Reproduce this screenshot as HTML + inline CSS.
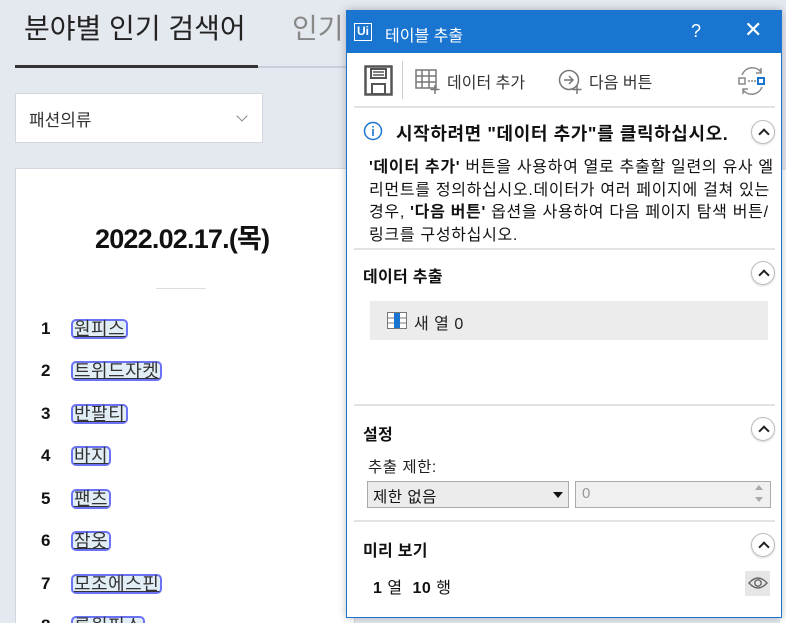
<!DOCTYPE html>
<html><head><meta charset="utf-8"><style>
*{margin:0;padding:0;box-sizing:border-box}
html,body{width:786px;height:623px;overflow:hidden}
body{background:#e4e8ef;position:relative;font-family:"Liberation Sans","Noto Sans CJK KR",sans-serif}
.a{position:absolute}
.tag{position:absolute;left:71px;height:20px;border:2px solid #6b72f5;border-radius:5px;background:#e2eef6;font-size:18px;line-height:16px;padding:0 1px;color:#333;text-decoration:underline;letter-spacing:0.5px}
.num{position:absolute;left:41px;font-size:17px;font-weight:bold;color:#111}
.dlg{position:absolute;left:346px;top:10px;width:436px;height:608px;background:#fff;border:1px solid #1a73cc;box-shadow:0 0 8px rgba(0,0,0,.25)}
.sep{position:absolute;left:7px;right:6px;height:2px;background:#e3e3e3}
.up{position:absolute;left:404px;width:24px;height:24px;border:1px solid #bbb;border-radius:50%;box-shadow:0 1px 2px rgba(0,0,0,.15)}
.up:after{content:"";position:absolute;left:8px;top:9px;width:6px;height:6px;border-left:2.5px solid #222;border-top:2.5px solid #222;transform:rotate(45deg)}
.h{position:absolute;left:16px;font-size:16px;font-weight:bold;color:#111;letter-spacing:0.3px}
.ln{white-space:nowrap;height:22.5px}
</style></head><body>
<div class="a" style="left:24px;top:7px;font-size:28px;color:#222">분야별 인기 검색어</div>
<div class="a" style="left:292px;top:7px;font-size:28px;color:#888">인기</div>
<div class="a" style="left:15px;top:65px;width:243px;height:3px;background:#333"></div>
<div class="a" style="left:258px;top:66px;width:100px;height:2px;background:#ccd"></div>
<div class="a" style="left:15px;top:93px;width:248px;height:50px;background:#fff;border:1px solid #d3d6dc"></div>
<div class="a" style="left:29px;top:106px;font-size:17px;color:#333">패션의류</div>
<div class="a" style="left:238px;top:112px;width:8px;height:8px;border-right:1.5px solid #888;border-bottom:1.5px solid #888;transform:rotate(45deg)"></div>
<div class="a" style="left:15px;top:168px;width:340px;height:460px;background:#fff;border:1px solid #d3d6dc"></div>
<div class="a" style="left:95px;top:217px;font-size:27px;font-weight:bold;color:#111;letter-spacing:-0.8px">2022.02.17.(목)</div>
<div class="a" style="left:156px;top:288px;width:50px;height:1px;background:#ddd"></div>
<div class="num" style="top:319px">1</div><div class="tag" style="top:319px">원피스</div>
<div class="num" style="top:361px">2</div><div class="tag" style="top:361px">트위드자켓</div>
<div class="num" style="top:404px">3</div><div class="tag" style="top:404px">반팔티</div>
<div class="num" style="top:446px">4</div><div class="tag" style="top:446px">바지</div>
<div class="num" style="top:489px">5</div><div class="tag" style="top:489px">팬츠</div>
<div class="num" style="top:531px">6</div><div class="tag" style="top:531px">잠옷</div>
<div class="num" style="top:574px">7</div><div class="tag" style="top:574px">모조에스핀</div>
<div class="num" style="top:616px">8</div><div class="tag" style="top:616px">롱원피스</div>
<div class="a" style="left:780px;top:170px;width:6px;height:453px;background:#fff"></div>

<div class="dlg">
 <div class="a" style="left:0;top:0;width:434px;height:42px;background:#1a75d0"></div>
 <div class="a" style="left:7px;top:12px;width:18px;height:18px;border:1.5px solid #fff;color:#fff;font-size:12px;font-weight:bold;line-height:15px;text-align:center">Ui</div>
 <div class="a" style="left:38px;top:11px;font-size:16px;color:#fff">테이블 추출</div>
 <div class="a" style="left:344px;top:10px;font-size:18px;color:#fff">?</div>
 <div class="a" style="left:397px;top:6px;font-size:22px;color:#fff">✕</div>
 <svg class="a" style="left:17px;top:54px" width="30" height="32" viewBox="0 0 30 32"><rect x="1.5" y="1.5" width="26" height="28" fill="none" stroke="#555" stroke-width="2.5"/><rect x="7" y="4" width="15" height="9" fill="none" stroke="#555" stroke-width="2"/><line x1="9" y1="7" x2="20" y2="7" stroke="#555" stroke-width="1.5"/><line x1="9" y1="10" x2="20" y2="10" stroke="#555" stroke-width="1.5"/><rect x="8" y="19" width="13" height="10" fill="none" stroke="#555" stroke-width="2"/></svg>
 <div class="a" style="left:55px;top:50px;width:1px;height:38px;background:#ccc"></div>
 <svg class="a" style="left:68px;top:58px" width="26" height="26"><g fill="none" stroke="#777" stroke-width="1.5"><rect x="1" y="1" width="20" height="18"/><line x1="7" y1="1" x2="7" y2="19"/><line x1="14" y1="1" x2="14" y2="19"/><line x1="1" y1="7" x2="21" y2="7"/><line x1="1" y1="13" x2="21" y2="13"/><line x1="20" y1="16" x2="20" y2="25"/><line x1="15.5" y1="20.5" x2="24.5" y2="20.5"/></g></svg>
 <div class="a" style="left:100px;top:58px;font-size:16px;color:#333">데이터 추가</div>
 <svg class="a" style="left:211px;top:58px" width="26" height="26"><g fill="none" stroke="#777" stroke-width="1.5"><circle cx="11" cy="11" r="9.5"/><path d="M6 11h9M11 7l4 4-4 4"/><line x1="19" y1="16" x2="19" y2="25"/><line x1="14.5" y1="20.5" x2="23.5" y2="20.5"/></g></svg>
 <div class="a" style="left:242px;top:58px;font-size:16px;color:#333">다음 버튼</div>
 <svg class="a" style="left:390px;top:55px" width="30" height="30"><g fill="none" stroke="#888" stroke-width="1.5"><path d="M5 9a11 11 0 0 1 19-3M24 2v5h-5M25 21a11 11 0 0 1-19 3M6 28v-5h5"/><rect x="2" y="12" width="6" height="6"/></g><rect x="21" y="12" width="6" height="6" fill="none" stroke="#1a75d0" stroke-width="2"/><g fill="#888"><circle cx="12" cy="15" r="1"/><circle cx="15" cy="15" r="1"/><circle cx="18" cy="15" r="1"/></g></svg>
 <div class="sep" style="top:95px"></div>
 <svg class="a" style="left:16px;top:110px" width="20" height="20"><circle cx="10" cy="10" r="8.5" fill="none" stroke="#1a75d0" stroke-width="1.5"/><rect x="9.2" y="8" width="1.6" height="7" fill="#1a75d0"/><rect x="9.2" y="5" width="1.6" height="1.6" fill="#1a75d0"/></svg>
 <div class="a" style="left:49px;top:109px;font-size:18px;font-weight:bold;color:#111;letter-spacing:0.6px;white-space:nowrap">시작하려면 "데이터 추가"를 클릭하십시오.</div>
 <div class="up" style="top:109px"></div>
 <div class="a" style="left:22px;top:146px;font-size:16px;line-height:22.5px;color:#111;letter-spacing:0.7px">
  <div class="ln"><b>'데이터 추가'</b> 버튼을 사용하여 열로 추출할 일련의 유사 엘</div>
  <div class="ln">리먼트를 정의하십시오.데이터가 여러 페이지에 걸쳐 있는</div>
  <div class="ln">경우, <b>'다음 버튼'</b> 옵션을 사용하여 다음 페이지 탐색 버튼/</div>
  <div class="ln">링크를 구성하십시오.</div>
 </div>
 <div class="sep" style="top:237px"></div>
 <div class="h" style="top:252px">데이터 추출</div>
 <div class="up" style="top:250px"></div>
 <div class="a" style="left:23px;top:290px;width:398px;height:39px;background:#ececec"></div>
 <svg class="a" style="left:40px;top:301px" width="20" height="17"><rect x="0.5" y="0.5" width="19" height="16" fill="#fff" stroke="#777"/><rect x="7" y="1" width="6" height="15" fill="#1a75d0"/><g stroke="#777"><line x1="0" y1="6" x2="7" y2="6"/><line x1="0" y1="11" x2="7" y2="11"/><line x1="13" y1="6" x2="20" y2="6"/><line x1="13" y1="11" x2="20" y2="11"/></g></svg>
 <div class="a" style="left:67px;top:299px;font-size:16px;color:#222;letter-spacing:0.5px">새 열 0</div>
 <div class="sep" style="top:393px"></div>
 <div class="h" style="top:410px">설정</div>
 <div class="up" style="top:406px"></div>
 <div class="a" style="left:21px;top:444px;font-size:15.5px;color:#222;letter-spacing:0.5px">추출 제한:</div>
 <div class="a" style="left:20px;top:470px;width:202px;height:27px;background:#ececec;border:1px solid #aaa"></div>
 <div class="a" style="left:26px;top:474px;font-size:15.5px;color:#111;letter-spacing:0.5px">제한 없음</div>
 <div class="a" style="left:206px;top:481px;border-left:5px solid transparent;border-right:5px solid transparent;border-top:6px solid #111"></div>
 <div class="a" style="left:228px;top:470px;width:196px;height:27px;background:#f0f0f0;border:1px solid #aaa"></div>
 <div class="a" style="left:235px;top:474px;font-size:15px;color:#999">0</div>
 <div class="a" style="left:408px;top:474px;border-left:4px solid transparent;border-right:4px solid transparent;border-bottom:5px solid #aaa"></div>
 <div class="a" style="left:408px;top:486px;border-left:4px solid transparent;border-right:4px solid transparent;border-top:5px solid #aaa"></div>
 <div class="sep" style="top:509px"></div>
 <div class="h" style="top:526px">미리 보기</div>
 <div class="up" style="top:522px"></div>
 <div class="a" style="left:26px;top:563px;font-size:16px;color:#111;letter-spacing:0.5px"><b>1</b> 열 &nbsp;<b>10</b> 행</div>
 <div class="a" style="left:398px;top:560px;width:25px;height:25px;background:#e6e6e6"></div>
 <svg class="a" style="left:401px;top:565px" width="20" height="14"><path d="M1 7Q10 -3 19 7Q10 17 1 7Z" fill="none" stroke="#666" stroke-width="1.4"/><circle cx="10" cy="7" r="3.2" fill="none" stroke="#666" stroke-width="1.4"/></svg>
</div>
</body></html>
